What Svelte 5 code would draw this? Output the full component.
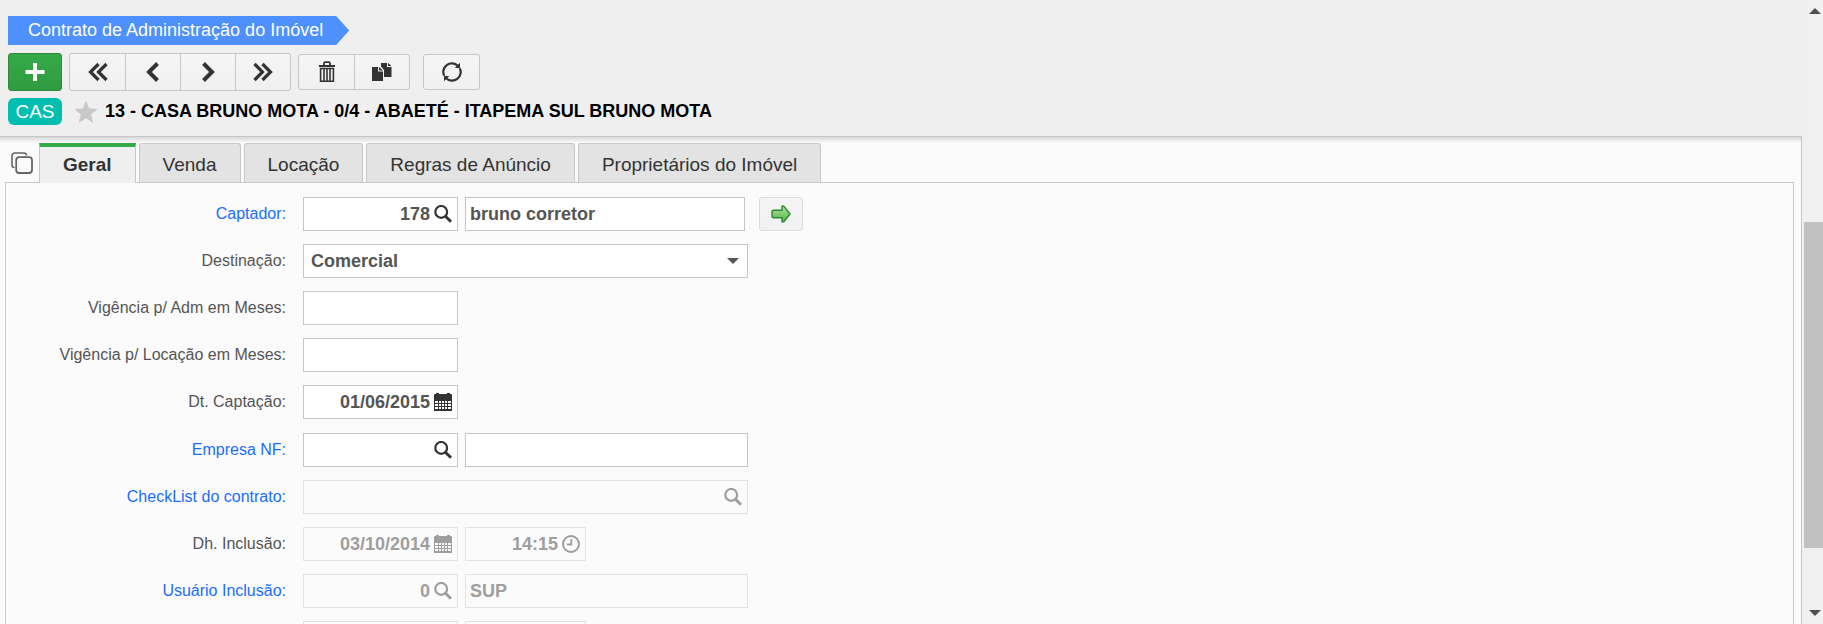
<script>
    const tabs = ['Geral', 'Venda', 'Locação', 'Regras de Anúncio', 'Proprietários do Imóvel'];
    let activeTab = $state('Geral');

    // each group is a block of the form, rows keep the order of the contract record
    const groups = [
        [
            { label: 'Captador:', link: true, go: true, fields: [
                { value: '178', size: 'short', icon: 'search' },
                { value: 'bruno corretor', size: 'name' }
            ] },
            { label: 'Destinação:', select: ['Comercial', 'Residencial'] },
            { label: 'Vigência p/ Adm em Meses:', fields: [{ value: '', size: 'short' }] },
            { label: 'Vigência p/ Locação em Meses:', fields: [{ value: '', size: 'short' }] },
            { label: 'Dt. Captação:', fields: [{ value: '01/06/2015', size: 'short', icon: 'calendar' }] }
        ],
        [
            { label: 'Empresa NF:', link: true, fields: [
                { value: '', size: 'short', icon: 'search' },
                { value: '', size: 'medium' }
            ] },
            { label: 'CheckList do contrato:', link: true, disabled: true, fields: [
                { value: '', size: 'full', icon: 'search' }
            ] },
            { label: 'Dh. Inclusão:', disabled: true, fields: [
                { value: '03/10/2014', size: 'short', icon: 'calendar' },
                { value: '14:15', size: 'time', icon: 'clock' }
            ] },
            { label: 'Usuário Inclusão:', link: true, disabled: true, fields: [
                { value: '0', size: 'short', icon: 'search' },
                { value: 'SUP', size: 'medium' }
            ] },
            { label: '', disabled: true, fields: [
                { value: '', size: 'short', icon: 'calendar' },
                { value: '', size: 'time', icon: 'clock' }
            ] }
        ]
    ];
</script>

{#snippet icon(name)}
    {#if name === 'search'}
        <svg class="icon" width="18" height="18" viewBox="0 0 18 18">
            <circle cx="7.2" cy="6.9" r="5.9" fill="none" stroke="currentColor" stroke-width="2.2" />
            <path d="M11.2 11 L17 16.8" stroke="currentColor" stroke-width="3" />
        </svg>
    {:else if name === 'calendar'}
        <svg class="icon" width="18" height="18" viewBox="0 0 18 18">
            <path fill="currentColor" fill-rule="evenodd" d="M0 2 Q0 1 1 1 H2 V0 H5 V1 H13 V0 H16 V1 H17 Q18 1 18 2 V18 H0 Z M1 8 V10 H4 V8 Z M5 8 V10 H7 V8 Z M8 8 V10 H10 V8 Z M11 8 V10 H13 V8 Z M14 8 V10 H17 V8 Z M1 11 V13 H4 V11 Z M5 11 V13 H7 V11 Z M8 11 V13 H10 V11 Z M11 11 V13 H13 V11 Z M14 11 V13 H17 V11 Z M1 14 V16 H4 V14 Z M5 14 V16 H7 V14 Z M8 14 V16 H10 V14 Z M11 14 V16 H13 V14 Z M14 14 V16 H17 V14 Z" />
        </svg>
    {:else}
        <svg class="icon" width="18" height="18" viewBox="0 0 18 18">
            <circle cx="9" cy="9" r="8" fill="none" stroke="currentColor" stroke-width="2" />
            <path d="M9.3 4 V9.5 H5" fill="none" stroke="currentColor" stroke-width="1.8" />
        </svg>
    {/if}
{/snippet}

<div class="page">
    <div class="content">
        <header>
            <div class="crumb">
                <span>Contrato de Administração do Imóvel</span>
            </div>
            <div class="toolbar">
                <button class="add" aria-label="Adicionar">
                    <svg width="20" height="20" viewBox="0 0 20 20"><path d="M10 1 V19 M0.5 10 H19.5" stroke="#fff" stroke-width="4" /></svg>
                </button>
                <div class="btn-group tall">
                    <button aria-label="Primeiro">
                        <svg width="20" height="20" viewBox="0 0 20 20"><path d="M10.5 2 L2.5 10 L10.5 18 M18.5 2 L10.5 10 L18.5 18" fill="none" stroke="#333" stroke-width="3.2" /></svg>
                    </button>
                    <button aria-label="Anterior">
                        <svg width="20" height="20" viewBox="0 0 20 20"><path d="M14.5 1.5 L6 10 L14.5 18.5" fill="none" stroke="#333" stroke-width="4" /></svg>
                    </button>
                    <button aria-label="Próximo">
                        <svg width="20" height="20" viewBox="0 0 20 20"><path d="M5.5 1.5 L14 10 L5.5 18.5" fill="none" stroke="#333" stroke-width="4" /></svg>
                    </button>
                    <button aria-label="Último">
                        <svg width="20" height="20" viewBox="0 0 20 20"><path d="M1.5 2 L9.5 10 L1.5 18 M9.5 2 L17.5 10 L9.5 18" fill="none" stroke="#333" stroke-width="3.2" /></svg>
                    </button>
                </div>
                <div class="btn-group">
                    <button aria-label="Excluir">
                        <svg width="18" height="22" viewBox="0 0 18 22">
                            <path d="M1 5 H17 M6 5 V2.5 Q6 1.2 7.2 1.2 H10.8 Q12 1.2 12 2.5 V5" fill="none" stroke="#333" stroke-width="1.8" />
                            <path d="M2.6 7.5 H15.4 V20.2 H2.6 Z M6 7 V21 M9 7 V21 M12 7 V21" fill="none" stroke="#333" stroke-width="1.6" />
                        </svg>
                    </button>
                    <button aria-label="Duplicar">
                        <svg width="20" height="20" viewBox="0 0 20 20">
                            <path fill="#333" d="M9 1 H15 V5 H19.5 V15 H12 V8 L9 4.6 Z M16 1 L19.5 4 H16 Z" />
                            <path fill="#333" d="M0 5 H6 V9.5 H11 V19 H0 Z M7 5 L11 8.6 H7 Z" />
                        </svg>
                    </button>
                </div>
                <div class="btn-group alone">
                    <button aria-label="Atualizar">
                        <svg width="20" height="20" viewBox="0 0 20 20">
                            <path d="M2.3 13.8 A8.5 8.5 0 0 1 15.8 3.8 M17.7 6.2 A8.5 8.5 0 0 1 4.2 16.2" fill="none" stroke="#333" stroke-width="2.2" />
                            <path d="M18 0.8 V6 H12.8 Z M2 19.2 V14 H7.2 Z" fill="#333" />
                        </svg>
                    </button>
                </div>
            </div>
            <div class="record">
                <span class="badge">CAS</span>
                <svg width="24" height="24" viewBox="0 0 24 24"><path fill="#c8c8c8" d="M12 0.5 L15.2 8.6 L23.6 9.1 L17.1 14.5 L19.2 22.8 L12 18.2 L4.8 22.8 L6.9 14.5 L0.4 9.1 L8.8 8.6 Z" /></svg>
                <h1>13 - CASA BRUNO MOTA - 0/4 - ABAETÉ - ITAPEMA SUL BRUNO MOTA</h1>
            </div>
        </header>

        <main>
            <nav class="tabs">
                <button class="windows" aria-label="Abas">
                    <svg width="22" height="22" viewBox="0 0 22 22">
                        <path d="M3.5 15.5 Q1 15.5 1 13 V4 Q1 1 4 1 H13 Q15.5 1 15.5 3.5" fill="none" stroke="#666" stroke-width="1.6" />
                        <rect x="5.2" y="5.2" width="15.8" height="15.8" rx="3" fill="none" stroke="#666" stroke-width="1.8" />
                    </svg>
                </button>
                {#each tabs as tab}
                    <button class="tab" class:active={tab === activeTab} onclick={() => (activeTab = tab)}>{tab}</button>
                {/each}
            </nav>
            <form class="panel">
                {#each groups as rows, g}
                    <div class="group">
                        {#each rows as row, r}
                            <div class="row" class:disabled={row.disabled}>
                                <label for="f{g}{r}0" class:link={row.link}>{row.label}</label>
                                {#if row.select}
                                    <div class="field full pick">
                                        <select id="f{g}{r}0">
                                            {#each row.select as option}
                                                <option>{option}</option>
                                            {/each}
                                        </select>
                                        <svg width="12" height="6" viewBox="0 0 12 6"><path d="M0 0 H12 L6 6 Z" fill="#555" /></svg>
                                    </div>
                                {:else}
                                    {#each row.fields as field, f}
                                        <div class="field {field.size}" class:with-icon={field.icon}>
                                            <input id="f{g}{r}{f}" type="text" value={field.value} disabled={row.disabled} aria-label={f || !row.label ? 'Descrição' : undefined}>
                                            {#if field.icon}
                                                <span class="icon-box">{@render icon(field.icon)}</span>
                                            {/if}
                                        </div>
                                    {/each}
                                {/if}
                                {#if row.go}
                                    <button type="button" class="go" aria-label="Abrir captador">
                                        <svg width="20" height="18" viewBox="0 0 20 18">
                                            <defs>
                                                <linearGradient id="leaf" x1="0" y1="0" x2="0" y2="1">
                                                    <stop offset="0" stop-color="#b5e29a" />
                                                    <stop offset="1" stop-color="#4fb548" />
                                                </linearGradient>
                                            </defs>
                                            <path d="M2 5.2 H11 V1.2 H12.8 L19 9 L12.8 16.8 H11 V12.8 H2 L1 11.8 V6.2 Z" fill="url(#leaf)" stroke="#2d8a34" stroke-width="1.4" />
                                        </svg>
                                    </button>
                                {/if}
                            </div>
                        {/each}
                    </div>
                {/each}
            </form>
        </main>
    </div>

    <div class="scrollbar">
        <svg width="12" height="6" viewBox="0 0 12 6"><path d="M0 6 H12 L6 0 Z" fill="#505050" /></svg>
        <div class="track">
            <div class="thumb"></div>
        </div>
        <svg width="12" height="6" viewBox="0 0 12 6"><path d="M0 0 H12 L6 6 Z" fill="#505050" /></svg>
    </div>
</div>

<style>
    :global(body){
        margin: 0;
        background-color: #efefef;
    }
    .page{
        display: flex;
        height: 100vh;
        overflow: hidden;
        font-family: "Liberation Sans", Arial, sans-serif;
        color: #555;
    }
    .page *{
        box-sizing: border-box;
    }
    svg{
        display: block;
        flex: none;
    }
    button{
        display: flex;
        align-items: center;
        justify-content: center;
        padding: 0;
        margin: 0;
        font-family: inherit;
        cursor: pointer;
    }
    .content{
        flex: 1;
        min-width: 0;
        display: flex;
        flex-direction: column;
    }

    /* header */
    header{
        display: flex;
        flex-direction: column;
        align-items: flex-start;
        padding: 16px 8px 11px 8px;
    }
    .crumb{
        background-color: #4d90fe;
        color: white;
        font-size: 18px;
        line-height: 29px;
        padding: 0 26px 0 20px;
        clip-path: polygon(0 0, calc(100% - 13px) 0, 100% 50%, calc(100% - 13px) 100%, 0 100%);
    }
    .toolbar{
        display: flex;
        align-items: center;
        gap: 7px;
        margin: 8px 0 7px 0;
    }
    .add{
        width: 54px;
        height: 38px;
        background: linear-gradient(#35aa47, #309a41);
        border: 1px solid #2d8a3b;
        border-radius: 3px;
    }
    .btn-group{
        display: flex;
        height: 36px;
        border: 1px solid #c6c6c6;
        border-radius: 3px;
        background: linear-gradient(#f5f5f5, #f0f0f0);
    }
    .btn-group.tall{
        height: 38px;
    }
    .btn-group.alone{
        margin-left: 6px;
    }
    .btn-group button{
        width: 55px;
        border: none;
        background: none;
    }
    .btn-group button + button{
        border-left: 1px solid #c6c6c6;
    }
    .record{
        display: flex;
        align-items: center;
    }
    .record svg{
        margin: 0 7px 0 12px;
    }
    .badge{
        width: 54px;
        background-color: #00bfb0;
        color: white;
        border-radius: 6px;
        font-size: 19px;
        line-height: 27px;
        text-align: center;
    }
    h1{
        margin: 0;
        color: black;
        font-size: 18px;
        line-height: 27px;
        white-space: nowrap;
    }

    /* tabs and panel */
    main{
        flex: 1;
        min-height: 0;
        overflow: hidden;
        display: flex;
        flex-direction: column;
        padding: 6px 7px 0 5px;
        background: linear-gradient(#d9d9d9, #fbfbfb 6px);
        border-top: 1px solid #c6c6c6;
        border-right: 1px solid #c6c6c6;
    }
    .tabs{
        display: flex;
        gap: 3px;
        padding-left: 6px;
    }
    .windows{
        width: 25px;
        border: none;
        background: none;
        justify-content: flex-start;
    }
    .tab{
        height: 39px;
        padding: 3px 23px 0 23px;
        border: 1px solid #c9c6c6;
        border-bottom: none;
        border-radius: 3px 3px 0 0;
        background-color: #e3e3e3;
        color: #333;
        font-size: 19px;
        white-space: nowrap;
    }
    .tab.active{
        height: 40px;
        margin-bottom: -1px;
        padding: 0 23px 1px 23px;
        border-top: 4px solid #35aa47;
        border-radius: 0;
        background-color: #efefef;
        font-weight: bold;
        z-index: 1;
    }
    .panel{
        flex: 1 0 auto;
        padding: 14px 16px;
        border: 1px solid #ccc8c8;
        border-bottom: none;
    }
    .group{
        display: grid;
        gap: 13px;
    }
    .group + .group{
        margin-top: 14px;
    }
    .row{
        display: flex;
        gap: 7px;
        height: 34px;
    }
    label{
        width: 264px;
        margin-right: 10px;
        font-size: 16px;
        line-height: 34px;
        text-align: right;
        white-space: nowrap;
    }
    label.link{
        color: #1a6dff;
    }
    .field{
        display: flex;
        background-color: white;
        border: 1px solid #c6c6c6;
        color: #333;
    }
    .short{
        width: 155px;
    }
    .name{
        width: 280px;
    }
    .medium{
        width: 283px;
    }
    .full{
        width: 445px;
    }
    .time{
        width: 121px;
    }
    input, select{
        flex: 1;
        min-width: 0;
        padding: 0 4px;
        border: none;
        outline: none;
        background: none;
        color: #555;
        font-family: inherit;
        font-size: 18px;
        font-weight: bold;
    }
    .with-icon input{
        padding-right: 0;
        text-align: right;
    }
    .icon-box{
        display: flex;
        align-items: center;
        justify-content: flex-end;
        width: 27px;
        padding-right: 5px;
    }
    .disabled .field{
        background-color: transparent;
        border-color: #e3e3e3;
        color: #9e9e9e;
    }
    .disabled input{
        color: #9e9e9e;
    }
    .pick{
        display: grid;
        align-items: center;
    }
    .pick select, .pick svg{
        grid-area: 1 / 1;
    }
    .pick select{
        height: 100%;
        padding: 0 7px;
        appearance: none;
    }
    .pick svg{
        justify-self: end;
        margin-right: 8px;
        pointer-events: none;
    }
    .go{
        width: 44px;
        margin-left: 7px;
        border: 1px solid #dcdcdc;
        border-radius: 3px;
        background: linear-gradient(#f5f5f5, #f1f1f1);
    }

    /* scrollbar */
    .scrollbar{
        width: 21px;
        padding: 8px 0;
        display: flex;
        flex-direction: column;
        align-items: center;
        gap: 6px;
        background-color: #f0f0f0;
    }
    .scrollbar svg{
        margin-left: 4px;
    }
    .track{
        flex: 1;
        align-self: stretch;
        display: flex;
        flex-direction: column;
        padding-left: 2px;
    }
    .track::before{
        content: "";
        flex: 202;
    }
    .thumb{
        flex: 326;
        background-color: #c1c1c1;
    }
    .track::after{
        content: "";
        flex: 56;
    }
</style>
